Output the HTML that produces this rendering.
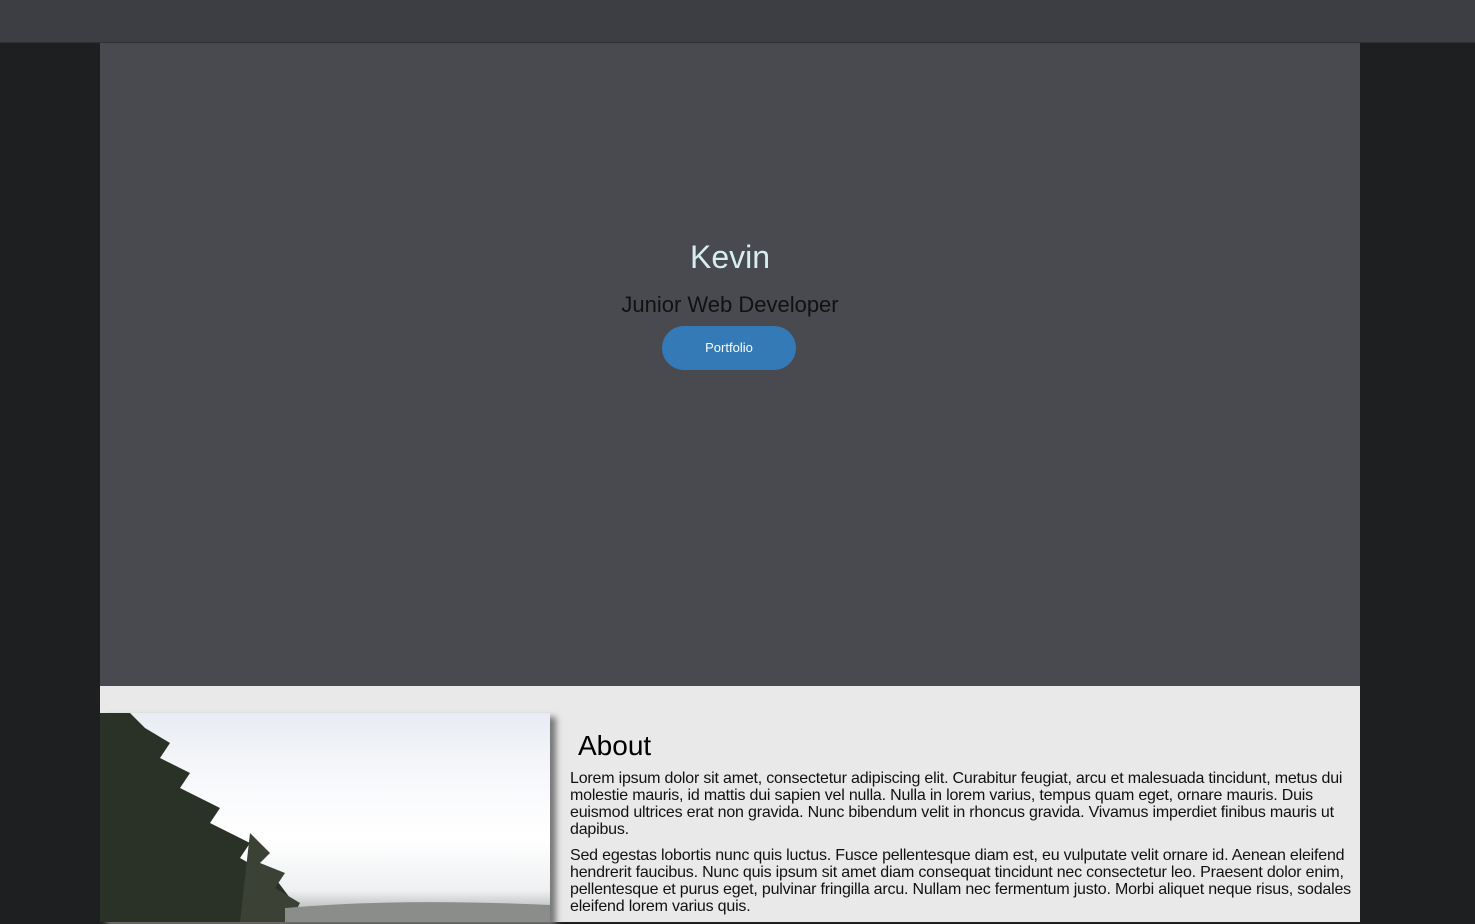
<!DOCTYPE html>
<html><head><style>
body{margin:0;background:#1e1f21;font-family:"Liberation Sans",Arial,sans-serif;width:1475px;height:922px;overflow:hidden;position:relative}
.top{position:absolute;left:0;top:0;width:1475px;height:42px;background:#3c3e44;border-bottom:1px solid #2e3034}
.hero{position:absolute;left:100px;top:43px;width:1260px;height:643px;background:#484a50;text-align:center}
.hero h1{position:absolute;left:0;right:0;top:196px;margin:0;font-weight:normal;font-size:32px;color:#d6eeee}
.hero h2{position:absolute;left:0;right:0;top:249px;margin:0;font-weight:normal;font-size:22px;color:#111}
.btn{position:absolute;left:562px;top:283px;width:134px;height:44px;border-radius:22px;background:#337ab7;color:#fff;font-size:13px;line-height:44px}
.about{position:absolute;left:100px;top:686px;width:1260px;height:236px;background:#e9e9e9}
.img{position:absolute;left:0;top:27px;width:450px;height:209px;background:linear-gradient(180deg,#e8ecf3 0%,#f7f8fb 30%,#fff 60%,#eef0f2 85%,#9a9d9a 100%);box-shadow:6px 4px 6px #777;overflow:hidden}
.txt{position:absolute;left:470px;top:0;width:785px;font-size:16px;line-height:17px;color:#111;letter-spacing:-0.2px}
.txt h3{margin:51px 0 16px 8px;font-weight:normal;font-size:28px;color:#000;letter-spacing:0}
.txt p{margin:0 0 9px}
</style></head><body>
<div class="top"></div>
<div class="hero"><h1>Kevin</h1><h2>Junior Web Developer</h2><div class="btn">Portfolio</div></div>
<div class="about">
<div class="img"><svg width="450" height="209"><path d="M0 0 L30 0 L45 15 L70 30 L60 45 L90 60 L80 75 L120 95 L110 110 L150 130 L140 145 L175 165 L190 185 L185 209 L0 209Z" fill="#2a3126"/><path d="M150 120 L170 140 L160 150 L185 160 L175 175 L200 190 L190 209 L140 209Z" fill="#3c4136"/><path d="M185 195 Q300 185 450 192 L450 209 L185 209Z" fill="#8a8d8a"/></svg></div>
<div class="txt"><h3>About</h3>
<p>Lorem ipsum dolor sit amet, consectetur adipiscing elit. Curabitur feugiat, arcu et malesuada tincidunt, metus dui molestie mauris, id mattis dui sapien vel nulla. Nulla in lorem varius, tempus quam eget, ornare mauris. Duis euismod ultrices erat non gravida. Nunc bibendum velit in rhoncus gravida. Vivamus imperdiet finibus mauris ut dapibus.</p>
<p>Sed egestas lobortis nunc quis luctus. Fusce pellentesque diam est, eu vulputate velit ornare id. Aenean eleifend hendrerit faucibus. Nunc quis ipsum sit amet diam consequat tincidunt nec consectetur leo. Praesent dolor enim, pellentesque et purus eget, pulvinar fringilla arcu. Nullam nec fermentum justo. Morbi aliquet neque risus, sodales eleifend lorem varius quis.</p>
</div></div>
</body></html>
